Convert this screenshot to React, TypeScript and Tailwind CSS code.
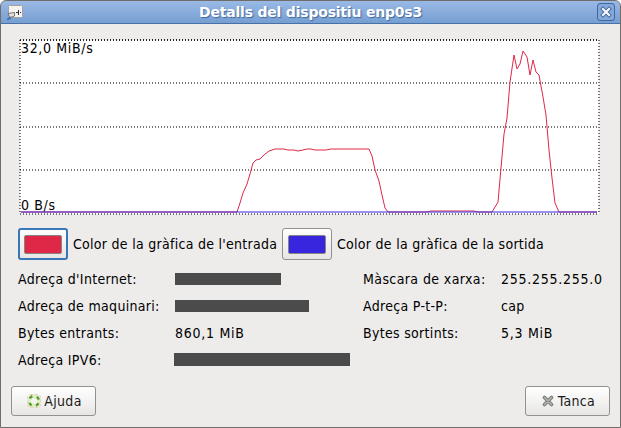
import React from "react";

const IN_POINTS =
  "21,212 237,212 240,203 243,193 247,184 250,174 253,163 256,160 260,159 264,155 269,151 275,149 284,149 288,150 294,150 298,151 303,150 307,149 311,149 315,150 326,150 331,149 369,149 372,156 375,170 379,181 382,195 385,208 388,212 427,212 431,211 474,211 478,212 492,212 498,202 501,168 504,134 507,118 510,82 514,55 517,69 520,64 523,51 527,57 530,75 533,60 536,72 539,75 543,97 546,115 549,150 552,178 555,203 559,212 597,212";

function Graph() {
  return (
    <div className="relative h-[178px] w-[584px] tracking-[0.65px]">
      <svg className="block" width="584" height="178" viewBox="18 38 584 178">
        <rect x="20" y="40" width="579" height="174" fill="#fff" />
        <g fill="none" strokeDasharray="1 2" strokeWidth="1">
          <path d="M20 40H599" stroke="#222" strokeWidth="2" />
          <path d="M20 83H599M20 127H599M20 170H599M20 214H599" stroke="#000" strokeWidth="2" strokeOpacity=".52" />
          <path d="M20 40V214M599 40V214" stroke="#000" strokeWidth="2" strokeOpacity=".52" />
        </g>
        <polyline points={IN_POINTS} fill="none" stroke="#de2849" strokeWidth="1" />
        <path d="M21 212H597" stroke="#3725dd" strokeOpacity=".5" strokeWidth="2" />
      </svg>
      <span className="absolute left-[3px] top-[2px] leading-4">32,0 MiB/s</span>
      <span className="absolute left-[3px] top-[159px] leading-4">0 B/s</span>
    </div>
  );
}

function Swatch({ fill, focus }: { fill: string; focus?: boolean }) {
  return (
    <button
      className={
        "flex h-8 w-[50px] shrink-0 items-center justify-center rounded-[3px] bg-gradient-to-b from-[#fdfdfd] to-[#e7e6e4] " +
        (focus ? "border-2 border-[#3976b8]" : "border border-[#93918e]")
      }
    >
      <span className={"h-[19px] w-[38px] rounded-[2px] border border-[#87857f] " + fill} />
    </button>
  );
}

function Cell({ children }: { children: React.ReactNode }) {
  return <span className="flex h-[27px] items-center">{children}</span>;
}

function Figure({ children }: { children: React.ReactNode }) {
  return <span className="flex h-[27px] items-center tracking-[0.74px]">{children}</span>;
}

export default function App() {
  return (
    <div className="flex h-[428px] w-[621px] flex-col overflow-hidden rounded-t-[6px] border border-[#716d6b] bg-[#edeceb] font-['DejaVu_Sans_Condensed','DejaVu_Sans',sans-serif] text-[14px] tracking-[0.31px] whitespace-nowrap text-black">
      <header className="-mx-px -mt-px flex h-6 shrink-0 items-center rounded-t-[6px] border-x border-t border-b border-x-[#50688f] border-t-[#3c5478] border-b-[#4a70a8] bg-gradient-to-b from-[#9ab9e5] to-[#769fd2] pr-[5px] pl-[6px]">
        <svg width="17" height="17" viewBox="0 0 17 17">
          <rect x="1.5" y="1.5" width="14" height="12" rx="1" fill="#f4f3f1" stroke="#a3a19d" />
          <path d="M9 8.5h2M13 8.5h1M11.500 6v5" stroke="#2e2e2e" />
          <path d="M1 9.500l6.500-1v3.500l-4.500 1.500z" fill="#e4e3e0" stroke="#77756f" />
          <path d="M.5 16v-1.500l2.500-1.500 1 1.500z" fill="#3f74b5" stroke="#3f74b5" strokeWidth=".7" />
        </svg>
        <span className="flex-1 text-center font-['DejaVu_Sans'] text-[14px] font-bold leading-4 tracking-[-0.2px] text-white [text-shadow:1px_1px_1px_#4068a0]">
          Detalls del dispositiu enp0s3
        </span>
        <button className="flex h-[18px] w-[18px] items-center justify-center rounded-[3px] border border-[#44679b] bg-[#83a8da]">
          <svg width="12" height="12" viewBox="0 0 12 12">
            <path d="M3 3l6 6M9 3L3 9" stroke="#44679b" strokeWidth="4" strokeLinecap="square" />
            <path d="M3 3l6 6M9 3L3 9" stroke="#f4f7fb" strokeWidth="2.2" strokeLinecap="square" />
          </svg>
        </button>
      </header>

      <main className="flex flex-1 flex-col pt-[14px]">
        <div className="pl-[17px]">
          <Graph />
        </div>
        <div className="mt-3 flex items-center pl-[17px] tracking-[0.28px]">
          <Swatch focus fill="bg-[#df2847]" />
          <span className="ml-[5px] w-[209px]">Color de la gràfica de l'entrada</span>
          <Swatch fill="bg-[#3826df]" />
          <span className="ml-[5px]">Color de la gràfica de la sortida</span>
        </div>
        <div className="mt-[6px] grid grid-cols-[157px_188px_138px_1fr] pl-[17px]">
          <Cell>Adreça d'Internet:</Cell>
          <Cell><i className="mb-[2px] h-3 w-[106px] bg-[#4b4b4b]" /></Cell>
          <Cell><span className="tracking-[0.4px]">Màscara de xarxa:</span></Cell>
          <Figure>255.255.255.0</Figure>
          <Cell>Adreça de maquinari:</Cell>
          <Cell><i className="mb-[2px] h-3 w-[134px] bg-[#4b4b4b]" /></Cell>
          <Cell>Adreça P-t-P:</Cell>
          <Cell>cap</Cell>
          <Cell>Bytes entrants:</Cell>
          <Figure>860,1 MiB</Figure>
          <Cell>Bytes sortints:</Cell>
          <Figure>5,3 MiB</Figure>
          <Cell>Adreça IPV6:</Cell>
          <Cell><i className="mb-[2px] -ml-px h-[13px] w-[176px] bg-[#4b4b4b]" /></Cell>
        </div>
        <footer className="mt-auto flex justify-between pr-[10px] pb-[11px] pl-[10px]">
          <button className="flex h-[30px] w-[85px] items-center justify-center gap-[3px] rounded-[3px] border border-[#93918e] bg-gradient-to-b from-white to-[#e7e6e4] pl-[2px] text-[#1a1a1a]">
            <svg width="14" height="14" viewBox="0 0 14 14" fill="none">
              <rect x=".5" y=".5" width="13" height="13" rx="3" stroke="#ecc9b0" strokeDasharray="3 1.5" />
              <circle cx="7" cy="7" r="4.800" stroke="#d9efc2" strokeWidth="3.400" />
              <circle cx="7" cy="7" r="5" stroke="#5f9c33" strokeWidth="2.500" strokeDasharray="3.2 4.65" strokeDashoffset="-2.33" />
            </svg>
            <span>Ajuda</span>
          </button>
          <button className="flex h-[30px] w-[85px] items-center justify-center gap-1 rounded-[3px] border border-[#93918e] bg-gradient-to-b from-white to-[#e7e6e4] pl-[2px] text-[#1a1a1a]">
            <svg width="12" height="12" viewBox="0 0 12 12">
              <path d="M2.5 2.5l7 7M9.5 2.5l-7 7" stroke="#7c7f79" strokeWidth="3.600" strokeLinecap="round" />
              <path d="M2.5 2.5l7 7M9.5 2.5l-7 7" stroke="#b2b4ae" strokeWidth="1.500" strokeLinecap="round" />
            </svg>
            <span>Tanca</span>
          </button>
        </footer>
      </main>
    </div>
  );
}
